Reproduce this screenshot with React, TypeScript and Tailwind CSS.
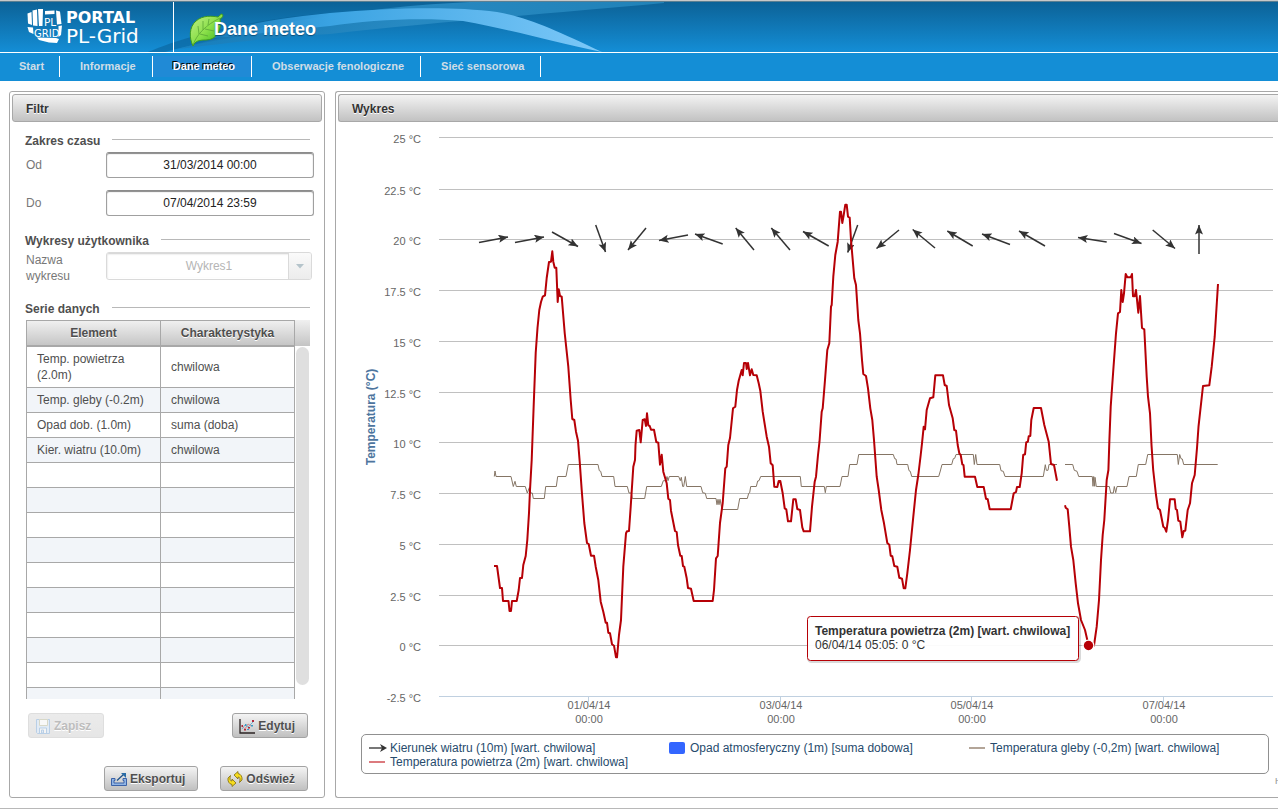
import type { ReactNode } from "react"

const NAV = ["Start", "Informacje", "Dane meteo", "Obserwacje fenologiczne", "Sieć sensorowa"]

const ROWS = [
  ["Temp. powietrza (2.0m)", "chwilowa"],
  ["Temp. gleby (-0.2m)", "chwilowa"],
  ["Opad dob. (1.0m)", "suma (doba)"],
  ["Kier. wiatru (10.0m)", "chwilowa"],
]

const EMPTY_ROWS = 10

const Y_AXIS = [
  { label: "25 °C", y: 137 },
  { label: "22.5 °C", y: 189 },
  { label: "20 °C", y: 239 },
  { label: "17.5 °C", y: 290 },
  { label: "15 °C", y: 341 },
  { label: "12.5 °C", y: 392 },
  { label: "10 °C", y: 442 },
  { label: "7.5 °C", y: 493 },
  { label: "5 °C", y: 544 },
  { label: "2.5 °C", y: 595 },
  { label: "0 °C", y: 645 },
  { label: "-2.5 °C", y: 696 },
]

const X_AXIS = [
  { label: "01/04/14", x: 589 },
  { label: "03/04/14", x: 781 },
  { label: "05/04/14", x: 972 },
  { label: "07/04/14", x: 1164 },
]

// tail x, tail y, head x, head y
const WIND = [
  [479, 242.5, 508, 237],
  [515, 242.5, 544, 237],
  [552, 232, 578, 246.5],
  [595.7, 225, 605.5, 252],
  [646, 228, 628, 250],
  [688, 235, 659, 240.5],
  [722.7, 244, 695, 234],
  [754, 250, 735.7, 228],
  [790, 250, 771.3, 228],
  [828.7, 246, 803, 231.5],
  [857.7, 225, 847.7, 252.5],
  [899, 230, 876.5, 248.5],
  [935, 248, 912.7, 229.5],
  [972.7, 246, 947.3, 231],
  [1010, 244.5, 982, 234],
  [1045, 246, 1019, 231],
  [1106.7, 242, 1078, 237.5],
  [1114, 233.5, 1141.5, 243.5],
  [1152.7, 230, 1175, 248.5],
  [1199, 254, 1199, 225],
]

const AIR = [
  "494,566 497,566 500,588 502,588 503,601 508.5,601 509.5,611 511,611 512,601 516.7,601 518.7,590 520,578 522,578 523.3,565 525.7,556 527.3,540 529,513 530,490 531.7,460 533.7,405 535.7,353 537.5,328 539.3,310 541,302 542.7,296.7 545,295.3 546.7,278 549,262 551,261.7 552.3,251.3 553.3,261.7 554.7,267.7 556.3,267.7 557.7,302 558.7,289.3 560,296 561.7,296.7 564.7,333 568.3,366.7 570.7,400 572.3,419 574.3,420 576,431.7 578,440.7 579.7,461.7 581.7,490 584.3,523 587,543 588.7,544 591,555.7 594,555.7 595.7,566.7 598.3,580 600.7,601.7 603.3,611.7 605.7,622.7 607,622.7 608.3,632.7 610,633.3 612,644.3 614,645.7 616,657.3 617,657.3 619,635 621,620 623.3,566.7 626,533.3 627,531.3 629,531 630.7,506.7 633.3,466.7 635,460 635.5,445 636.7,430.7 639.3,430 640.7,442.3 642.7,420 644.7,419.3 646,426 647,413.3 648.3,425.3 649.7,426 651,429.7 654,429.7 656.3,442 658.3,442.7 660,464.7 661.7,454.7 663.3,471.7 666.7,483.3 668.3,498.7 670,500 671,510.7 675,531 676.7,532 678,545 680.3,555.7 681.7,556 683,566 684.3,566.7 686.7,578.3 688,588 691,588.7 693.7,601 712.7,601 714,590 716,558.3 717.7,556 720,523 722.7,503 725.3,468.3 726.7,466.7 728.3,445 730,438 733,408.3 735.3,406.7 737,390 738.7,380.7 741.7,370 742.7,375.3 744,363 746,363 746.7,369 748,363 750,375.3 751.7,369.3 753.3,375 756.7,375.3 758.7,383.3 760.3,390.7 762.7,411.7 766.7,436.7 769,446.7 770.7,463.3 772.7,465.3 774.3,486.7 777.3,487 778.7,481 780.3,481 782.7,493.3 784.7,508.3 786.3,509.3 788,521.3 791,521.3 793.3,499.3 795.7,499.3 797.3,509 800,510 802.3,527.3 803.7,531.3 810,531.3 812,506.7 814.7,481.7 816,476.7 818,455 819.5,441.7 821.7,411.7 822.7,408.3 825,380 827.3,350 829.3,343.3 831,306.7 831.7,305 833.3,276.7 835.3,255 837.7,241.7 840,211.7 841,211.7 842.3,223 843.7,215 845.3,204.7 846.7,204.7 848,216.7 849.7,217.7 851,240 854.3,278.3 856,285 858.3,320 860,333.3 862,360 863.3,374 866,376 868,388.3 870.3,408.3 872.3,420 874,440 876.7,476.7 878.7,490 881.3,510 884,523.3 887.3,543 889.3,544.7 890.7,555.7 892.3,556.3 894.3,566 897.3,566.7 899.3,577.7 902,578.7 903.7,588.3 905.3,588.3 907.3,573.3 910,550 913.3,516.7 916,490 918.3,475 920.7,455 922,443.3 923.7,426.7 925,429.3 926.7,410 930,398.3 933.3,397.3 935.3,375.3 943,375.3 944.7,385 946.7,386 949,405 952.7,418.3 954.3,430 956,430.7 957.7,445 959.3,453.3 960.7,455 962.3,464.3 963.5,465 964.7,476.7 975,476.7 977.3,487 983.7,487 986,498.7 987.7,499.3 989.7,509.3 1010.7,509.3 1013.7,493.3 1016,492 1017,487 1019.7,487 1021.7,473.3 1023.2,455 1025,454.3 1026.2,442.5 1027.9,441.7 1028.7,436.3 1030.3,436 1031.3,420 1033.7,408 1041,408 1044.3,425 1048.7,441.7 1051,464 1054,465 1057,480.7",
  "1065,505.3 1065.7,507.7 1067.7,509.3 1069.3,526.7 1071,546.7 1073.3,560 1075.7,583.3 1078,603.3 1081,620 1085,630 1087.3,640 1088.5,645.5 1094,645.5 1096.7,626.7 1099,600 1101,560 1102.7,535 1104.3,520 1106.7,480 1108.4,470 1109.4,440 1110.7,406.7 1113.3,370 1116,333.3 1118,313.3 1120,312 1121.3,290 1122.7,302 1124,293.3 1125.7,274 1127.3,277.3 1130.7,277.3 1132,274 1133,296.3 1134.7,296.3 1136,290 1138.3,312.7 1140,296 1142,328 1144.3,329.3 1146.7,376.7 1148,396.7 1150,413.3 1151.5,445 1153.2,470 1156,495 1158,508.3 1160,510 1163.3,526.7 1164.7,527.7 1166.3,531.7 1168,520 1170,499.3 1174.7,499.3 1175.7,509 1177,510 1178.3,520.7 1180.3,521.7 1182.3,537.3 1183.7,531 1185.3,530.7 1187.7,510 1190,503.3 1192,483.3 1194.7,475 1197,448 1198.5,426.7 1203,386 1209.3,385.3 1211.7,366.7 1214.7,336.7 1218,284",
]

const SOIL = [
  "494.3,476.5 495,471 496,476.5 511,476.5 513.3,486.5 515,481.3 516.3,486.5 525.3,486.5 527.3,493 529.3,487.7 530.7,493 532.3,493 533.3,498.5 544.3,498.5 545.7,486.5 556.3,486.5 557.7,476.5 566,476.5 568.3,464.5 598,464.5 599.3,470.7 600.7,471.3 602,476.5 613.7,476.5 615,486.5 627.3,486.5 629,493 631.3,493 632.3,498.5 644.7,498.5 646.7,486.5 661.3,486.5 663.3,480.7 665.7,480.7 667,476.5 668,480.7 669.3,476.5 678.7,476.5 680.3,480.7 681.3,477.3 682.7,486.5 683.7,486.5 685.3,476.5 686.7,486.5 701,486.5 702.7,492.7 705.3,493.3 706.7,498.5 716,498.5 717,504.7 718,499.3 719,504.7 720,499.3 722,509.5 737.7,509.5 739.7,498.5 747.3,498.5 748.7,493.3 749.7,492.7 750.7,486.5 756.3,486.5 757.7,481 759,480.7 760.7,476.5 800.3,476.5 801.3,486.5 824.3,486.5 825.3,492.7 826.3,486.5 840,486.5 842,476.5 848,476.5 849.7,464.5 857,464.5 858.7,454.5 893.3,454.5 894.7,458.7 896,459 897,464.5 907.7,464.5 909,470.7 910.3,471.3 911.7,476.5 938.7,476.5 940.3,471 942,464.5 951.7,464.5 953.3,458.7 954.7,458.3 956,454.5 973.3,454.5 974.3,464.5 975.7,454.5 977,464.5 999.7,464.5 1001,470.7 1003.3,471.3 1005,476.5 1043.3,476.5 1045.3,464.7 1046.3,470.3 1048,470.3 1049,464.5 1057,464.5",
  "1065,464.5 1072.7,464.5 1074.3,470.3 1077,471.3 1078.7,476.5 1092.3,476.5 1093,486.3 1093.7,476.5 1094.7,486.3 1095,477.3 1096.3,486.5 1109.3,486.5 1110.7,493 1113.3,493 1114.3,486.5 1115.7,492.7 1117,486.5 1127,486.5 1129,476.5 1136.3,476.5 1138.3,464.5 1145.7,464.5 1147.7,454.5 1177.3,454.5 1178.3,464.5 1179.7,454.5 1181,458.7 1182.3,459 1183.7,464.5 1217.7,464.5",
]

function Logo() {
  return (
    <svg width="36" height="38" viewBox="0 0 36 38" fill="#fff" aria-hidden="true">
      <path d="M0.500 5.500 4.500 4 5 17 1 15.500z" />
      <path d="M5.500 2.500 10 1.500 10.500 18 6 17.500z" />
      <path d="M11 1 16 1 15.500 18 12 18z" />
      <path d="M18 3 27.500 2.500 27.500 6 18 6.500z" />
      <path d="M29 2.500 33 3.500 34.500 16 30 16.500z" />
      <path d="M0.500 19 6 19.500 6.500 26 2 24z" />
      <path d="M31.500 18 35 17.500 34 27 31.500 29z" />
      <path d="M10 29.500 29 30 32 31 30 35 22 34.500 12 32z" />
      <text x="17" y="18" fontSize="10.500" fontFamily="DejaVu Sans">PL</text>
      <text x="7" y="28.500" fontSize="10" fontFamily="DejaVu Sans">GRID</text>
    </svg>
  )
}

function Leaf() {
  return (
    <svg width="36" height="36" viewBox="0 0 36 36" aria-hidden="true">
      <defs>
        <linearGradient id="leaf" x1="0" y1="0" x2="1" y2="1">
          <stop offset="0" stopColor="#c4f08c" />
          <stop offset="0.5" stopColor="#8be04a" />
          <stop offset="1" stopColor="#2fae12" />
        </linearGradient>
      </defs>
      <path d="M4 33C0 25 0 14 7 8 14 2 23 3 29 4 31 3 31 1 33 1 35 3 33 5 31 6 33 16 28 27 17 27 10 27 6 28 4 33z" fill="url(#leaf)" stroke="#3d9c1e" />
      <path d="M4 32C8 21 17 12 31 5M10 21 9 13M14 17 14 8M19 12 20 6M11 21 19 23M16 16 25 18" fill="none" stroke="#5aa636" strokeWidth="0.800" />
    </svg>
  )
}

function Swoosh() {
  return (
    <svg className="absolute top-0 left-0 h-full w-[700px]" viewBox="0 2 700 50" preserveAspectRatio="none" aria-hidden="true">
      <defs>
        <linearGradient id="arc" x1="150" x2="600" y1="0" y2="0" gradientUnits="userSpaceOnUse">
          <stop offset="0" stopColor="#2a95dc" stopOpacity="0" />
          <stop offset="0.4" stopColor="#3aa3e2" />
          <stop offset="1" stopColor="#7cc8f8" />
        </linearGradient>
        <linearGradient id="beam" x1="150" x2="663" y1="0" y2="0" gradientUnits="userSpaceOnUse">
          <stop offset="0" stopColor="#1b78b0" stopOpacity="0.5" />
          <stop offset="0.5" stopColor="#2a8cc4" stopOpacity="0.9" />
          <stop offset="1" stopColor="#2182b8" />
        </linearGradient>
      </defs>
      <path d="M148 52C190 34 260 18 330 13L330 26C270 30 210 40 165 52z" fill="#0a5f96" opacity="0.55" />
      <path d="M178 49C250 40 290 36 330 34 430 23 530 15 664 3L664 2 470 2C400 5 340 14 290 22 240 32 210 40 178 49z" fill="url(#beam)" />
      <path d="M190 40C250 22 290 17 330 13 390 8 450 6 497 12 530 18 555 30 602 52 550 41 513 30 463 21 420 17 370 20 330 26 280 31 240 36 190 40z" fill="url(#arc)" />
    </svg>
  )
}

function Panel({ title, className, children }: { title: string; className: string; children: ReactNode }) {
  return (
    <section className={className}>
      <h2 className="h-7 rounded-[3px] border border-[#a8a8a8] bg-linear-to-b from-[#f3f3f3] to-[#c2c2c2] pl-[13px] text-xs leading-[28px] font-bold text-[#333] [text-shadow:0_1px_0_#fff]">
        {title}
      </h2>
      {children}
    </section>
  )
}

function SectionTitle({ children }: { children: ReactNode }) {
  return (
    <h3 className="flex items-center gap-3 pr-3 pl-[13px] text-xs leading-4 font-bold text-[#4f4f4f]">
      {children}
      <span className="mb-[3px] h-px flex-1 bg-[#b8b8b8]" />
    </h3>
  )
}

function DateField({ id, label, value }: { id: string; label: string; value: string }) {
  return (
    <div className="flex items-center pr-2 pl-[14px]">
      <label htmlFor={id} className="w-20 text-[#777]">
        {label}
      </label>
      <input
        id={id}
        defaultValue={value}
        className="h-[26px] min-w-0 flex-1 rounded-[3px] border border-[#a0a0a0] border-t-[#8c8c8c] bg-white text-center text-[#222] shadow-[inset_0_1px_1px_#888]"
      />
    </div>
  )
}

function ToolButton({ icon, children, disabled }: { icon: ReactNode; children: ReactNode; disabled?: boolean }) {
  return (
    <button
      type="button"
      disabled={disabled}
      className="flex h-[25px] items-center gap-[3px] rounded-[3px] border border-[#a3a3a3] bg-linear-to-b from-[#f4f4f4] to-[#c0c0c0] pr-3 pl-1.5 font-bold text-[#4f4f4f] [text-shadow:0_1px_0_#fff] disabled:border-[#dedede] disabled:from-[#ebebeb] disabled:to-[#e6e6e6] disabled:text-[#bdbdbd]"
    >
      {icon}
      {children}
    </button>
  )
}

function SaveIcon() {
  return (
    <svg width="16" height="16" viewBox="0 0 16 16" fill="none" stroke="#b9cfe6" aria-hidden="true">
      <path d="M1.500 1.500h13v14h-12l-1-1z" fill="#e2ebf5" />
      <path d="M4.500 1.500h8v6h-8z" fill="#f8f8f8" stroke="#d8d8c8" />
      <path d="M4.500 15v-5h7v5M6.500 12v3h2v-3z" fill="#f4f4f4" />
    </svg>
  )
}

function ChartIcon() {
  return (
    <svg width="16" height="16" viewBox="0 0 16 16" fill="none" aria-hidden="true">
      <path d="M1 1V15H16" stroke="#2b2323" strokeWidth="1.300" />
      <path d="M3 11 6 7 9 9 14 4" stroke="#6fb3d2" />
      <path d="M3 8 6 11 9 6 12 8" stroke="#cf8a90" />
      <path d="M2.500 7h1.500v2H2.500zM5 11h2v1.500H5zM9 9h2v1.500H9zM13 2h2v2h-2z" fill="#b3283a" />
      <path d="M6 6h1.500v2H6zM8 11h2v1H8zM12 7h2v1.500h-2z" fill="#3b9bc4" />
    </svg>
  )
}

function ExportIcon() {
  return (
    <svg width="16" height="16" viewBox="0 0 16 16" fill="none" aria-hidden="true">
      <path d="M0.500 7.500h3.500v2h-1v2.500h10v-2.500h-1v-2h3.500v7h-15z" fill="#90b4e4" stroke="#3b62a8" />
      <path d="M6 9.500 13 3" stroke="#1c4f86" strokeWidth="1.200" />
      <path d="M10 2h5v5z" fill="#2a6ca6" />
    </svg>
  )
}

function RefreshIcon() {
  return (
    <svg width="16" height="16" viewBox="0 0 16 16" fill="#f6dc1e" stroke="#7d6a12" strokeWidth="0.800" aria-hidden="true">
      <path d="M7 4 11 0.500V2.500C14 3 15.500 6 15 9L12.500 11.500C13.500 8 13 6 11 6V8z" />
      <path d="M9 12 5 15.500V13.500C2 13 0.500 10 1 7L3.500 4.500C2.500 8 3 10 5 10V8z" />
    </svg>
  )
}

function MeteoChart() {
  return (
    <svg viewBox="336 122 942 610" className="block w-full font-['Liberation_Sans',sans-serif]" role="img" aria-label="Wykres">
      <defs>
        <marker id="head" markerUnits="userSpaceOnUse" markerWidth="12" markerHeight="10" refX="9.500" refY="4" orient="auto">
          <path d="M0 0 9.500 4 0 8 2 4z" fill="#333" />
        </marker>
      </defs>

      {Y_AXIS.map(({ label, y }) => (
        <g key={label}>
          <path d={`M439 ${y + 0.5}H1273`} stroke={y === 696 ? "#c0d0e0" : "#c0c0c0"} />
          <text x="421" y={y + 6} textAnchor="end" fontSize="11" fill="#666">
            {label}
          </text>
        </g>
      ))}

      {X_AXIS.map(({ label, x }) => (
        <g key={label} textAnchor="middle" fontSize="11" fill="#666">
          <path d={`M${x - 0.5} 697V702`} stroke="#c0d0e0" />
          <text x={x} y="709">{label}</text>
          <text x={x} y="723">00:00</text>
        </g>
      ))}

      <text transform="translate(375 417) rotate(-90)" textAnchor="middle" fontSize="12" fontWeight="bold" fill="#4d759e">
        Temperatura (°C)
      </text>

      {WIND.map(([x1, y1, x2, y2]) => (
        <line key={x1} x1={x1} y1={y1} x2={x2} y2={y2} stroke="#333" strokeWidth="1.500" markerEnd="url(#head)" />
      ))}

      {SOIL.map((points) => (
        <polyline key={points} points={points} fill="none" stroke="#857565" strokeWidth="1" />
      ))}
      {AIR.map((points) => (
        <polyline key={points} points={points} fill="none" stroke="#b60006" strokeWidth="2" strokeLinejoin="round" />
      ))}

      <circle cx="1088.500" cy="645.500" r="6" fill="#fff" />
      <circle cx="1088.500" cy="645.500" r="4.700" fill="#b60006" />

      <rect x="808.500" y="617.500" width="271" height="44" rx="3" fill="none" stroke="#000" strokeWidth="3" opacity="0.150" />
      <rect x="807.500" y="616.500" width="271" height="44" rx="3" fill="#fff" fillOpacity="0.930" stroke="#b60006" />
      <text x="815" y="635" fontSize="12" fontWeight="bold" fill="#333">
        Temperatura powietrza (2m) [wart. chwilowa]
      </text>
      <text x="815" y="649" fontSize="12" fill="#333">
        06/04/14 05:05: 0 °C
      </text>
    </svg>
  )
}

function Legend() {
  return (
    <ul className="mr-[9px] ml-[25px] flex flex-wrap rounded-[5px] border border-[#909090] pt-1.5 pb-1 pl-[7px] leading-[14px] text-[#274b6d]">
      <li className="flex w-[300px] items-center gap-[3px]">
        <svg width="18" height="8" viewBox="0 0 18 8" aria-hidden="true">
          <path d="M0 4H13" stroke="#777" strokeWidth="2" />
          <path d="M11 0 18 4 11 8 13 4z" fill="#333" />
        </svg>
        Kierunek wiatru (10m) [wart. chwilowa]
      </li>
      <li className="flex w-[300px] items-center gap-[5px]">
        <span className="h-3 w-4 rounded-xs bg-[#3366ff]" />
        Opad atmosferyczny (1m) [suma dobowa]
      </li>
      <li className="flex w-[270px] items-center gap-[5px]">
        <span className="h-0.5 w-4 bg-[#b3a598]" />
        Temperatura gleby (-0,2m) [wart. chwilowa]
      </li>
      <li className="flex w-[300px] items-center gap-[5px]">
        <span className="h-0.5 w-4 bg-[#dc7a7e]" />
        Temperatura powietrza (2m) [wart. chwilowa]
      </li>
    </ul>
  )
}

function SeriesTable() {
  return (
    <div className="mt-[3px] ml-[14px] flex h-[379px] overflow-hidden">
      <table className="h-fit w-[269px] table-fixed border-collapse text-[#4f4f4f]">
        <thead>
          <tr className="h-[25px] bg-linear-to-b from-[#f0f0f0] to-[#c4c4c4] [text-shadow:0_1px_0_#fff]">
            <th className="border border-b-2 border-[#a8a8a8]">Element</th>
            <th className="border border-b-2 border-[#a8a8a8]">Charakterystyka</th>
          </tr>
        </thead>
        <tbody>
          {ROWS.map(([name, kind]) => (
            <tr key={name} className="h-[25px] even:bg-[#f2f5f9]">
              <td className="border border-[#a8a8a8] px-2.5 py-1">{name}</td>
              <td className="border border-[#a8a8a8] px-2.5 py-1">{kind}</td>
            </tr>
          ))}
          {Array.from({ length: EMPTY_ROWS }, (_, i) => (
            <tr key={i} className="h-[25px] even:bg-[#f2f5f9]">
              <td className="border border-[#a8a8a8]" />
              <td className="border border-[#a8a8a8]" />
            </tr>
          ))}
        </tbody>
      </table>
      <div className="flex w-[15px] flex-col">
        <div className="h-[26px] bg-linear-to-b from-[#f0f0f0] to-[#c4c4c4]" />
        <div className="mx-px mt-px h-[338px] rounded-full bg-[#dfdfdf]" />
      </div>
    </div>
  )
}

export default function App() {
  return (
    <div className="overflow-hidden bg-white font-['Liberation_Sans',sans-serif] text-xs leading-4">
      <div className="h-0.5 border-t border-[#c8c8c8] bg-[#5b7f92]" />
      <header className="relative flex h-[51px] border-b border-white bg-linear-to-b from-[#0c6297] to-[#148ed6]">
        <Swoosh />
        <a href="#portal" className="relative flex w-[174px] items-center gap-[3px] border-r border-white pl-[27px] text-white">
          <Logo />
          <span className="flex flex-col font-['DejaVu_Sans',sans-serif]">
            <span className="text-base leading-[18px] font-bold">PORTAL</span>
            <span className="text-xl leading-[18px]">PL-Grid</span>
          </span>
        </a>
        <div className="relative flex items-center pl-[15px]">
          <div className="pt-2">
            <Leaf />
          </div>
          <h1 className="-ml-[11px] pt-[3px] text-lg font-bold text-white [text-shadow:0_1px_1px_#0a4f7c]">Dane meteo</h1>
        </div>
      </header>

      <nav className="flex h-7 items-start bg-[#148ed6] pt-[3px] text-[11px] font-bold text-[#cfdde6]">
        {NAV.map((item) => (
          <a
            key={item}
            href="#nav"
            aria-current={item === "Dane meteo" ? "page" : undefined}
            className="h-[21px] border-r border-white pr-4 pl-5 leading-[21px] first:pr-[15px] first:pl-[19px] aria-[current=page]:bg-[#208ad6] aria-[current=page]:text-white aria-[current=page]:[text-shadow:-1px_-1px_0_#000]"
          >
            {item}
          </a>
        ))}
      </nav>

      <main className="mt-[10px] flex gap-[10px] pl-[9px]">
        <Panel title="Filtr" className="w-[316px] shrink-0 rounded-[3px] border border-[#a8a8a8] p-[2px]">
          <form className="flex flex-col pt-[11px] pb-1">
            <SectionTitle>Zakres czasu</SectionTitle>
            <div className="flex flex-col gap-3 pt-[3px]">
              <DateField id="from" label="Od" value="31/03/2014 00:00" />
              <DateField id="to" label="Do" value="07/04/2014 23:59" />
            </div>

            <div className="pt-[17px]">
              <SectionTitle>Wykresy użytkownika</SectionTitle>
            </div>
            <div className="mt-[3px] flex items-start pr-2.5 pl-[14px]">
              <label htmlFor="chart" className="w-20 pr-5 text-[#777]">
                Nazwa wykresu
              </label>
              <div className="relative h-7 flex-1 overflow-hidden rounded-[3px] border border-[#dadada]">
                <select
                  id="chart"
                  disabled
                  className="h-[25px] w-full appearance-none bg-white text-center text-[#b5b5b5] opacity-100 shadow-[inset_0_1px_2px_#ccc] [text-align-last:center]"
                >
                  <option>Wykres1</option>
                </select>
                <span className="pointer-events-none absolute inset-y-0 right-0 flex w-[23px] items-center justify-center border-l border-[#dadada] bg-linear-to-b from-[#fafafa] to-[#ececec]">
                  <svg width="8" height="5" viewBox="0 0 8 5" aria-hidden="true">
                    <path d="M0 0H8L4 4.500z" fill="#b5c4cb" />
                  </svg>
                </span>
              </div>
            </div>

            <div className="pt-[17px]">
              <SectionTitle>Serie danych</SectionTitle>
            </div>
            <SeriesTable />

            <div className="mt-[14px] flex justify-between pr-[14px] pl-4">
              <ToolButton disabled icon={<SaveIcon />}>Zapisz</ToolButton>
              <ToolButton icon={<ChartIcon />}>Edytuj</ToolButton>
            </div>
            <div className="mt-7 flex justify-end gap-[22px] pr-[14px]">
              <ToolButton icon={<ExportIcon />}>Eksportuj</ToolButton>
              <ToolButton icon={<RefreshIcon />}>Odśwież</ToolButton>
            </div>
          </form>
        </Panel>

        <Panel title="Wykres" className="min-w-0 flex-1 rounded-l-[3px] border border-r-0 border-[#a8a8a8] py-[2px] pl-[2px] [&>h2]:rounded-r-none [&>h2]:border-r-0">
          <div className="-ml-[2px]">
            <MeteoChart />
            <div className="pt-[2px]">
              <Legend />
            </div>
            <a href="#highcharts" className="ml-auto block w-[3px] overflow-hidden text-[9px] leading-[14px] whitespace-nowrap text-[#909090]">
              Highcharts.com
            </a>
          </div>
        </Panel>
      </main>
      <footer className="mt-[10px] border-t border-[#b8b8b8]" />
    </div>
  )
}
